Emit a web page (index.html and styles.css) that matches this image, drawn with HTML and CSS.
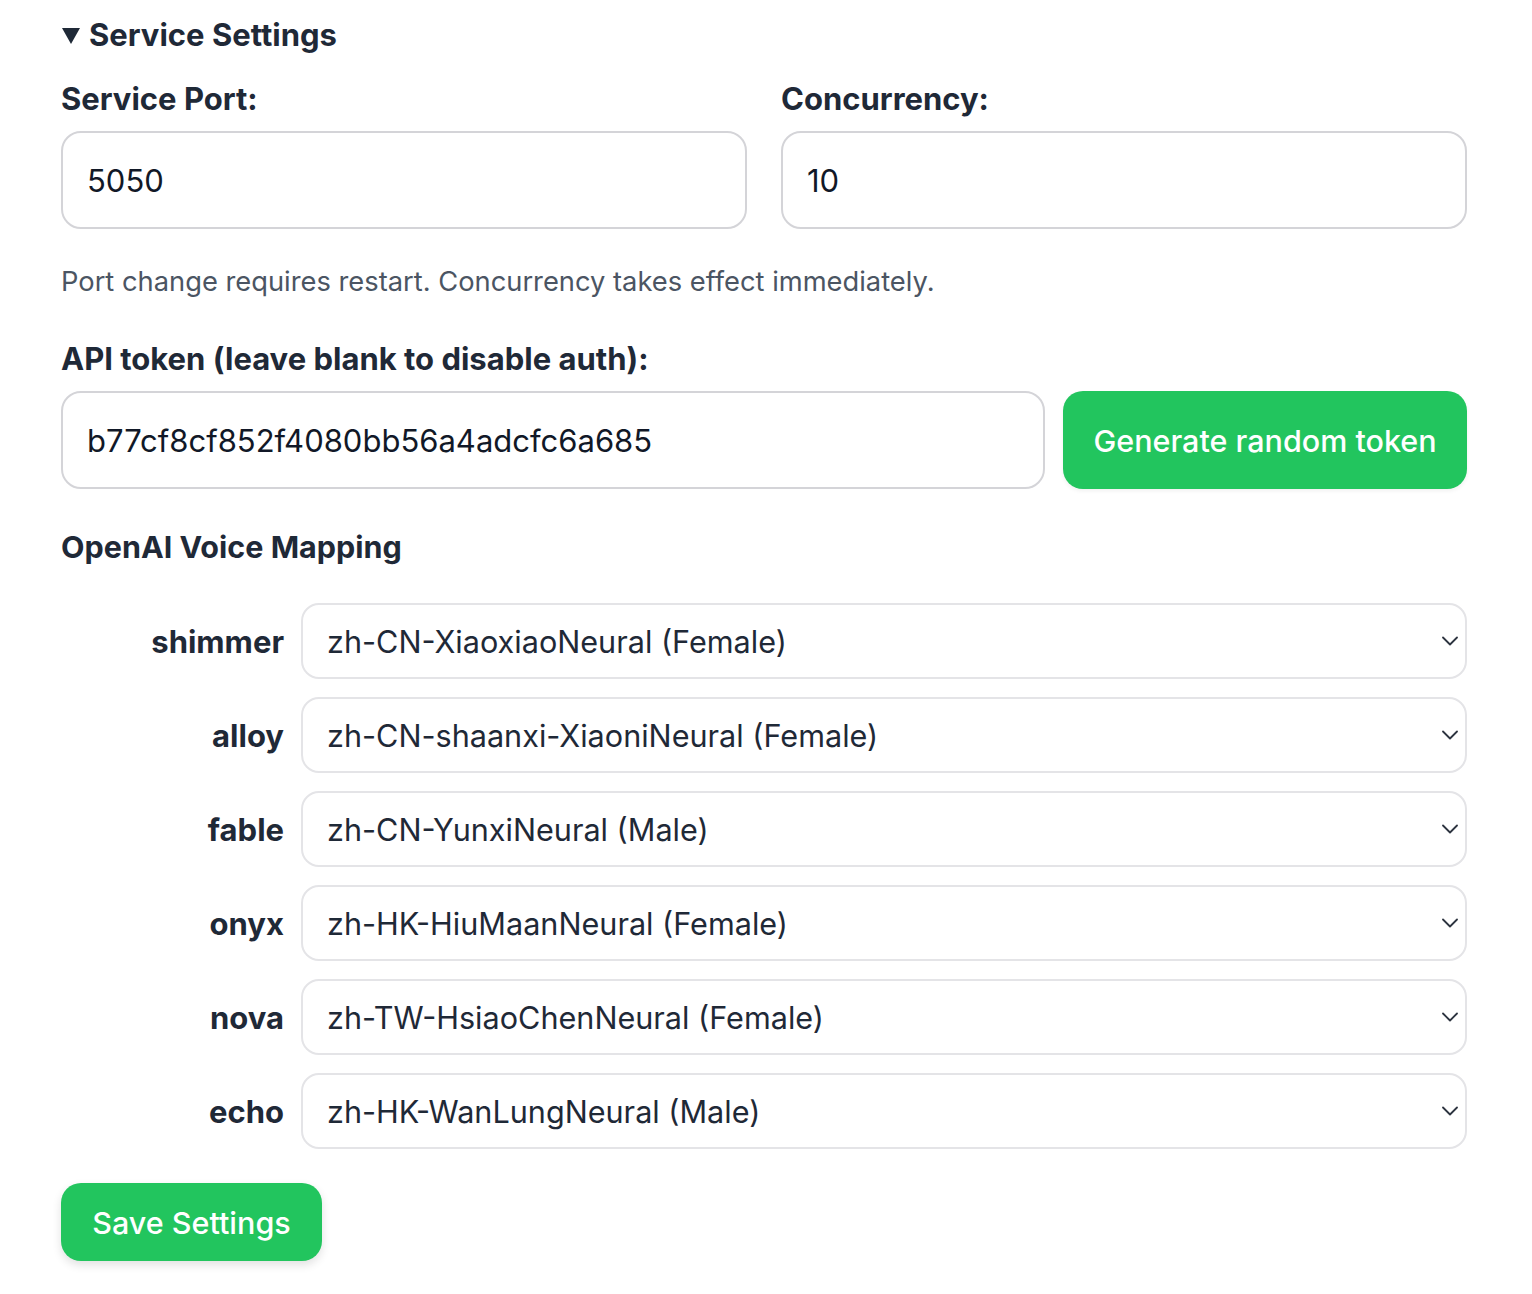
FILE: index.html
```html
<!DOCTYPE html>
<html lang="en">
<head>
<meta charset="utf-8">
<title>Service Settings</title>
<link rel="stylesheet" href="styles.css">
</head>
<body>
<main class="page">
  <details class="settings" open>
    <summary class="summary"><svg class="caret" width="20" height="18" viewBox="0 0 20 18"><path d="M1 1 L19 1 L10 17 Z" fill="#1f2937"/></svg>Service Settings</summary>

    <div class="pair">
      <div class="field">
        <label class="label" for="port">Service Port:</label>
        <input class="input" id="port" type="text" value="5050">
      </div>
      <div class="field">
        <label class="label" for="conc">Concurrency:</label>
        <input class="input" id="conc" type="text" value="10">
      </div>
    </div>
    <p class="hint">Port change requires restart. Concurrency takes effect immediately.</p>

    <label class="label label-api" for="token">API token (leave blank to disable auth):</label>
    <div class="token-row">
      <input class="input token-input" id="token" type="text" value="b77cf8cf852f4080bb56a4adcfc6a685">
      <button class="btn btn-gen" type="button">Generate random token</button>
    </div>

    <h3 class="section-title">OpenAI Voice Mapping</h3>
    <div class="mapping">
      <label class="voice">shimmer</label>
      <div class="select-wrap"><select class="select"><option>zh-CN-XiaoxiaoNeural (Female)</option></select><svg class="chev" width="16" height="10" viewBox="0 0 16 10"><path d="M1 1.5 L8 8.5 L15 1.5" fill="none" stroke="#2d3440" stroke-width="1.8" stroke-linecap="round" stroke-linejoin="round"/></svg></div>
      <label class="voice">alloy</label>
      <div class="select-wrap"><select class="select"><option>zh-CN-shaanxi-XiaoniNeural (Female)</option></select><svg class="chev" width="16" height="10" viewBox="0 0 16 10"><path d="M1 1.5 L8 8.5 L15 1.5" fill="none" stroke="#2d3440" stroke-width="1.8" stroke-linecap="round" stroke-linejoin="round"/></svg></div>
      <label class="voice">fable</label>
      <div class="select-wrap"><select class="select"><option>zh-CN-YunxiNeural (Male)</option></select><svg class="chev" width="16" height="10" viewBox="0 0 16 10"><path d="M1 1.5 L8 8.5 L15 1.5" fill="none" stroke="#2d3440" stroke-width="1.8" stroke-linecap="round" stroke-linejoin="round"/></svg></div>
      <label class="voice">onyx</label>
      <div class="select-wrap"><select class="select"><option>zh-HK-HiuMaanNeural (Female)</option></select><svg class="chev" width="16" height="10" viewBox="0 0 16 10"><path d="M1 1.5 L8 8.5 L15 1.5" fill="none" stroke="#2d3440" stroke-width="1.8" stroke-linecap="round" stroke-linejoin="round"/></svg></div>
      <label class="voice">nova</label>
      <div class="select-wrap"><select class="select"><option>zh-TW-HsiaoChenNeural (Female)</option></select><svg class="chev" width="16" height="10" viewBox="0 0 16 10"><path d="M1 1.5 L8 8.5 L15 1.5" fill="none" stroke="#2d3440" stroke-width="1.8" stroke-linecap="round" stroke-linejoin="round"/></svg></div>
      <label class="voice">echo</label>
      <div class="select-wrap"><select class="select"><option>zh-HK-WanLungNeural (Male)</option></select><svg class="chev" width="16" height="10" viewBox="0 0 16 10"><path d="M1 1.5 L8 8.5 L15 1.5" fill="none" stroke="#2d3440" stroke-width="1.8" stroke-linecap="round" stroke-linejoin="round"/></svg></div>
    </div>

    <button class="btn btn-save" type="button">Save Settings</button>
  </details>
</main>
</body>
</html>
```

FILE: styles.css
```css
* { box-sizing: border-box; }

html, body {
  margin: 0;
  padding: 0;
  background: #ffffff;
}

body {
  font-family: Inter, "Noto Sans", "Liberation Sans", sans-serif;
  color: #1f2937;
}

.page {
  padding: 15px 65px 40px 61px;
}

.settings {
  display: block;
}

.summary {
  list-style: none;
  display: flex;
  align-items: center;
  gap: 8px;
  font-size: 31px;
  font-weight: 700;
  line-height: 40px;
  color: #1f2937;
  cursor: pointer;
}
.summary::-webkit-details-marker { display: none; }

.caret {
  display: block;
  margin-top: 2px;
}

.pair {
  display: grid;
  grid-template-columns: 1fr 1fr;
  column-gap: 34px;
  margin-top: 24px;
}

.field {
  display: flex;
  flex-direction: column;
}

.label {
  display: block;
  font-size: 31px;
  font-weight: 700;
  line-height: 40px;
  color: #1f2937;
  margin-bottom: 12px;
}

.input {
  display: block;
  width: 100%;
  height: 98px;
  border: 2px solid #d4d4d8;
  border-radius: 20px;
  padding: 0 24px;
  font-family: Inter, "Noto Sans", "Liberation Sans", sans-serif;
  font-size: 31px;
  color: #111827;
  background: #ffffff;
  outline: none;
}

.hint {
  margin: 35px 0 0;
  font-size: 27.3px;
  line-height: 36px;
  color: #4b5563;
}

.label-api {
  margin-top: 39px;
}

.token-row {
  display: flex;
  gap: 18px;
}

.token-input {
  flex: 1;
  width: auto;
}

.btn {
  border: none;
  background: #22c55e;
  color: #ffffff;
  font-family: Inter, "Noto Sans", "Liberation Sans", sans-serif;
  font-size: 30.5px;
  font-weight: 500;
  border-radius: 20px;
  cursor: pointer;
}

.btn-gen {
  width: 404px;
  height: 98px;
  box-shadow: 0 2px 4px rgba(0, 0, 0, 0.06);
}

.section-title {
  margin: 38px 0 0;
  font-size: 30.5px;
  font-weight: 700;
  line-height: 40px;
  color: #1f2937;
}

.mapping {
  display: grid;
  grid-template-columns: 223px 1fr;
  column-gap: 17px;
  row-gap: 18px;
  margin-top: 36px;
  align-items: center;
}

.voice {
  text-align: right;
  font-size: 31px;
  font-weight: 700;
  color: #1f2937;
}

.select-wrap {
  position: relative;
}

.select {
  display: block;
  width: 100%;
  height: 76px;
  appearance: none;
  -webkit-appearance: none;
  border: 2px solid #e4e4e7;
  border-radius: 18px;
  padding: 0 60px 0 24px;
  font-family: Inter, "Noto Sans", "Liberation Sans", sans-serif;
  font-size: 30.6px;
  color: #1f2937;
  background: #ffffff;
  outline: none;
}

.chev {
  position: absolute;
  right: 9px;
  top: 33px;
  pointer-events: none;
}

.btn-save {
  display: block;
  margin-top: 34px;
  width: 261px;
  height: 78px;
  box-shadow: 0 4px 10px rgba(0, 0, 0, 0.12);
}
```
